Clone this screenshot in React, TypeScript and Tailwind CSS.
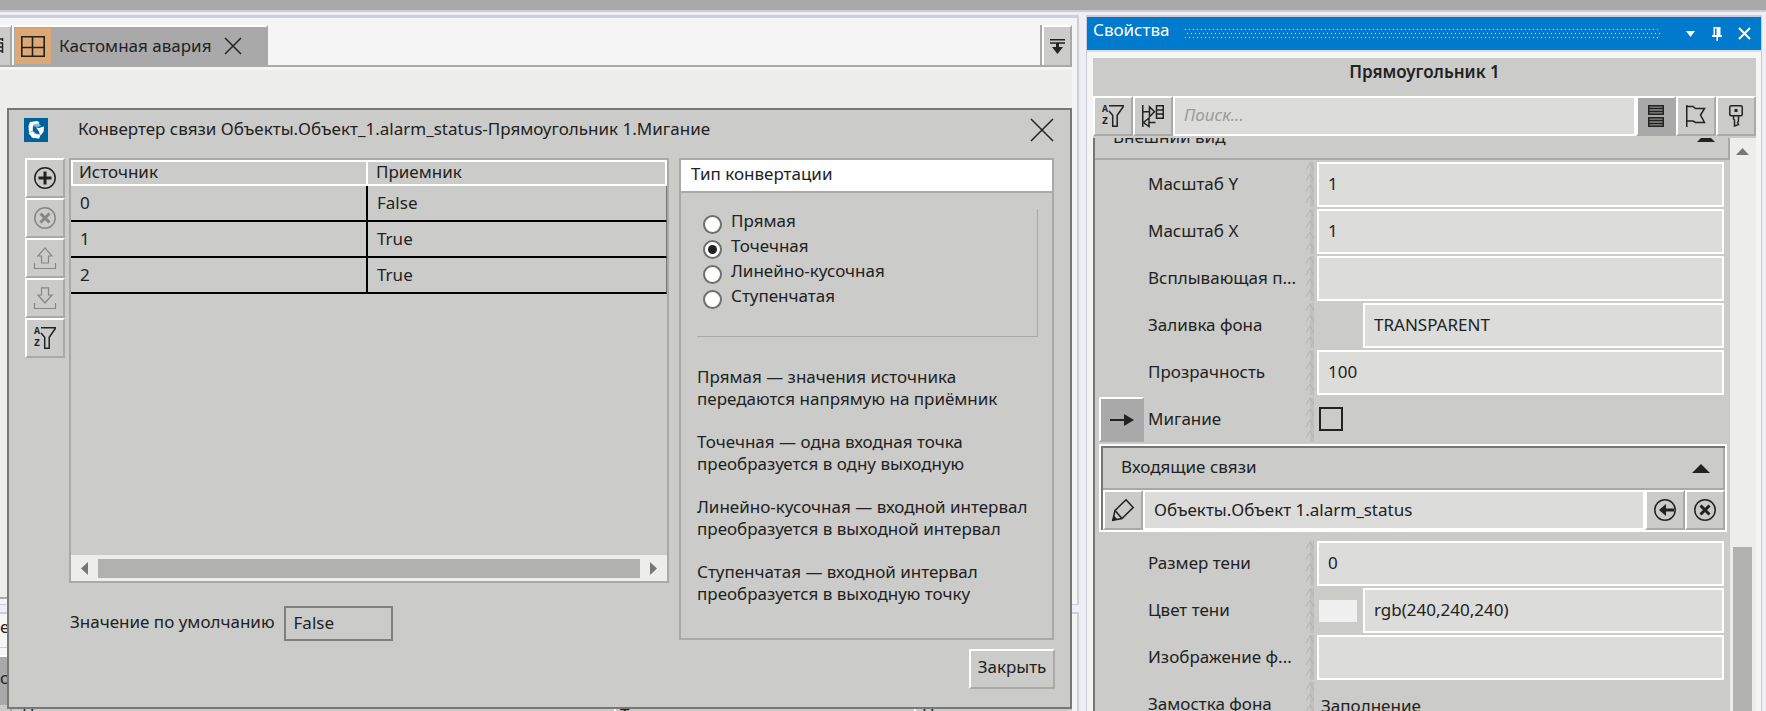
import React, { useState } from "react";
import clsx from "clsx";

const bevel =
  "border-2 border-t-white border-l-white border-r-[#a9a9a9] border-b-[#a9a9a9]";

const links = [
  { source: "0", target: "False" },
  { source: "1", target: "True" },
  { source: "2", target: "True" },
];

const modes = ["Прямая", "Точечная", "Линейно-кусочная", "Ступенчатая"];

const help = [
  ["Прямая — значения источника", "передаются напрямую на приёмник"],
  ["Точечная — одна входная точка", "преобразуется в одну выходную"],
  ["Линейно-кусочная — входной интервал", "преобразуется в выходной интервал"],
  ["Ступенчатая — входной интервал", "преобразуется в выходную точку"],
];

// --- Icons ---
interface IconProps {
  w?: number;
  h?: number;
  className?: string;
  sw?: number;
  children: React.ReactNode;
}

const Icon: React.FC<IconProps> = ({ w = 22, h = 22, className, sw = 1.5, children }) => (
  <svg
    width={w}
    height={h}
    viewBox={`0 0 ${w} ${h}`}
    fill="none"
    stroke="currentColor"
    strokeWidth={sw}
    className={clsx("shrink-0 overflow-visible", className)}
    aria-hidden="true"
  >
    {children}
  </svg>
);

const SortFilterIcon = () => (
  <Icon>
    <g
      fill="currentColor"
      stroke="none"
      fontFamily="'Liberation Mono', monospace"
      fontSize="10"
      fontWeight="bold"
    >
      <text x="0" y="7">A</text>
      <text x="0" y="19">Z</text>
    </g>
    <path d="M7 0.75H21.2V1.8L15.2 10.3V21.2H10.7V10.3L7 6" />
  </Icon>
);

const LinksIcon = () => (
  <Icon>
    <path d="M0.75 0V22M0.75 6.75H7.5M7.5 1.75L12.5 6.75L7.5 11.75ZM14.5 0.75H21.25V13.25H14.5ZM14.5 5H21.25M14.5 9H21.25" />
    <path d="M1.5 17.5L7 13V21.5ZM7 17.5H13.5" />
  </Icon>
);

const StackIcon = () => (
  <Icon w={16}>
    <path
      fill="#8c8c8a"
      d="M0.75 0.75H15.25V9.25H0.75ZM0.75 3.5H15.25M0.75 6.5H15.25M0.75 12.75H15.25V21.25H0.75ZM0.75 15.5H15.25M0.75 18.5H15.25"
    />
  </Icon>
);

const FlagIcon = () => (
  <Icon w={20}>
    <path d="M0.75 0V22M0.75 1.5H7L9.5 3.5H18.5L14.5 10L18.5 17.5H9.5L7 16H0.75" />
  </Icon>
);

const KeyIcon = () => (
  <Icon w={14}>
    <rect x="0.75" y="0.75" width="12.5" height="10" rx="1.5" />
    <rect x="5.5" y="4" width="3" height="3" fill="currentColor" stroke="none" />
    <path d="M4.5 11V14L5.5 15V21L9.5 19.5L8.5 17.5L9.5 16V11" />
  </Icon>
);

const PlusCircle = () => (
  <Icon>
    <circle cx="11" cy="11" r="10.2" />
    <path strokeWidth="3" d="M11 4.5V17.5M4.5 11H17.5" />
  </Icon>
);

const CrossCircle = () => (
  <Icon>
    <circle cx="11" cy="11" r="10.2" />
    <path strokeWidth="3" d="M6.5 6.5L15.5 15.5M15.5 6.5L6.5 15.5" />
  </Icon>
);

const BackCircle = () => (
  <Icon>
    <circle cx="11" cy="11" r="10.2" />
    <path strokeWidth="3" d="M10 11H20" />
    <path fill="currentColor" stroke="none" d="M5 11L12 5V17Z" />
  </Icon>
);

const MoveUpIcon = () => (
  <Icon sw={1.2}>
    <path d="M11 0.8L18 9H14.5V16H7.5V9H4ZM0.5 16V21.5H21.5V16" />
  </Icon>
);

const MoveDownIcon = () => (
  <Icon sw={1.2}>
    <path d="M7.5 0.8H14.5V8H18L11 16L4 8H7.5ZM0.5 16V21.5H21.5V16" />
  </Icon>
);

const PencilIcon = () => (
  <Icon>
    <path d="M14 0.8L21.2 8.5L10 19.5L0.8 21.2L3 11.5ZM3 11.5L10 19.5" />
    <path fill="currentColor" stroke="none" d="M1.8 16.5L5.5 20.5L0 22Z" />
  </Icon>
);

const CrossIcon = ({ size, sw }: { size: number; sw: number }) => (
  <Icon w={size} h={size} sw={sw}>
    <path d={`M0 0L${size} ${size}M${size} 0L0 ${size}`} />
  </Icon>
);

const Triangle = ({ w, h, className }: { w: number; h: number; className?: string }) => (
  <Icon w={w} h={h} className={className}>
    <path fill="currentColor" stroke="none" d={`M${w / 2} 0L${w} ${h}H0Z`} />
  </Icon>
);

const AppLogo = () => (
  <svg width="24" height="24" viewBox="0 0 24 24" className="shrink-0" aria-hidden="true">
    <rect width="24" height="24" fill="#00619d" />
    <path fill="#8fbcd9" d="M7 5L14 4L17 8L13 9L9 8L9 13L13 16L17 15L15.5 20.5L8 20L5 15Z" />
    <path fill="#fff" d="M6 4L13.5 3L15.5 5L9 6.5L8.5 12.5L5 14.5L4.5 8Z" />
    <path fill="#fff" d="M4.5 15L9 13.5L10.5 16L16 17L15 20.5L8.5 19.5Z" />
    <path fill="#fff" d="M12 9.5L15 10L20 8.5L19.5 14L16.5 17.5L15 13.5Z" />
  </svg>
);

const ToolButton: React.FC<{
  label: string;
  disabled?: boolean;
  active?: boolean;
  children: React.ReactNode;
}> = ({ label, disabled, active, children }) => (
  <button
    type="button"
    aria-label={label}
    disabled={disabled}
    className={clsx(
      "flex size-10 shrink-0 items-center justify-center",
      bevel,
      active && "bg-[#a9a9a9]",
      disabled && "text-[#868684]"
    )}
  >
    {children}
  </button>
);

// --- Converter dialog ---
const ConverterDialog = () => {
  const [mode, setMode] = useState("Точечная");

  return (
    <section
      role="dialog"
      aria-label="Конвертер связи"
      className="absolute top-[93px] right-[7px] left-[7px] z-10 border-2 border-[#777775] bg-[#cbcbc9]"
    >
      <header className="flex h-10 items-center pr-[17px] pl-[15px]">
        <AppLogo />
        <h2 className="ml-[30px] flex-1 pb-[2px]">
          Конвертер связи Объекты.Объект_1.alarm_status-Прямоугольник 1.Мигание
        </h2>
        <button type="button" aria-label="Закрыть окно">
          <CrossIcon size={22} sw={1.5} />
        </button>
      </header>

      <div className="mt-2 flex px-4">
        <div className="mr-1 flex flex-col">
          <ToolButton label="Добавить"><PlusCircle /></ToolButton>
          <ToolButton label="Удалить" disabled><CrossCircle /></ToolButton>
          <ToolButton label="Выше" disabled><MoveUpIcon /></ToolButton>
          <ToolButton label="Ниже" disabled><MoveDownIcon /></ToolButton>
          <ToolButton label="Сортировка"><SortFilterIcon /></ToolButton>
        </div>

        <div className="min-w-0 flex-1">
          <div className="flex h-[425px] flex-col border-2 border-[#a9a9a9]">
            <table className="w-full table-fixed border-separate border-spacing-0 text-left">
              <thead>
                <tr className="h-[26px]">
                  <th className="w-[297px] border-2 border-white p-0 pb-[2px] pl-[6px] leading-5 font-normal">
                    Источник
                  </th>
                  <th className="border-2 border-l-0 border-white p-0 pb-[2px] pl-2 leading-5 font-normal">
                    Приемник
                  </th>
                </tr>
              </thead>
              <tbody>
                {links.map((l) => (
                  <tr key={l.source} className="h-9">
                    <td className="border-r-2 border-b-2 border-r-black border-b-black p-0 pl-[9px]">
                      {l.source}
                    </td>
                    <td className="border-r border-b-2 border-r-[#777775] border-b-black p-0 pl-[9px]">
                      {l.target}
                    </td>
                  </tr>
                ))}
              </tbody>
            </table>
            <div className="mt-auto flex h-[26px] items-center bg-[#ededeb] px-[10px] text-[#777775]">
              <Icon w={7} h={13}>
                <path fill="currentColor" stroke="none" d="M7 0V13L0 6.5Z" />
              </Icon>
              <div className="mx-[10px] h-[19px] flex-1 bg-[#b1b1af]" />
              <Icon w={7} h={13}>
                <path fill="currentColor" stroke="none" d="M0 0V13L7 6.5Z" />
              </Icon>
            </div>
          </div>
          <div className="mt-[23px] flex items-center gap-[9px] pl-px">
            <label htmlFor="default" className="pb-[3px]">Значение по умолчанию</label>
            <input
              id="default"
              defaultValue="False"
              className="h-[35px] w-[109px] border-2 border-[#7f7f7d] px-2 pb-[2px]"
            />
          </div>
        </div>

        <div className="ml-[10px] h-[482px] w-[375px] border-2 border-[#a9a9a9]">
          <h3 className="border-b-2 border-[#a9a9a9] bg-white pt-[3px] pb-[6px] pl-[10px]">
            Тип конвертации
          </h3>
          <div className="pt-4 pr-[14px] pl-4">
            <fieldset className="h-32 border-r border-b border-[#a9a9a9] pl-[6px]">
              {modes.map((m) => (
                <label key={m} className="flex h-[25px] items-start gap-[9px] leading-6">
                  <input
                    type="radio"
                    name="mode"
                    checked={mode === m}
                    onChange={() => setMode(m)}
                    className="mt-[6px] grid size-[19px] appearance-none place-items-center rounded-full border-2 border-[#6f6f6d] bg-white before:size-[9px] before:rounded-full checked:before:bg-[#222]"
                  />
                  {m}
                </label>
              ))}
            </fieldset>
            <div className="mt-[29px] space-y-[21px] whitespace-nowrap">
              {help.map(([a, b]) => (
                <p key={a}>
                  {a}
                  <br />
                  {b}
                </p>
              ))}
            </div>
          </div>
        </div>
      </div>

      <div className="flex justify-end pt-2 pr-[15px] pb-[18px]">
        <button type="button" className={clsx("h-10 w-[86px] pb-[5px]", bevel)}>
          Закрыть
        </button>
      </div>
    </section>
  );
};

// --- Document area, mostly hidden behind the dialog ---
const DocumentArea = () => (
  <div className="relative flex min-w-0 flex-1 flex-col">
    <div className="flex h-[590px] shrink-0 flex-col border-t-[3px] border-r-2 border-b border-[#cbcedb] bg-[#f5f5f5] pr-[5px] pb-[5px]">
      <div className="mt-[7px] flex h-[42px] border-b-2 border-[#a9a9a9]">
        <div className="flex w-3 items-center border-t-2 border-r-2 border-t-white border-r-[#a9a9a9] bg-[#cbcbc9]">
          <Icon w={3} h={16}>
            <path d="M0 1H3M0 5H3M0 9H3M0 13H3M2.5 0V3M2.5 5V15" />
          </Icon>
        </div>
        <div className="ml-[2px] flex items-center border-t-2 border-r-2 border-t-white border-r-[#a9a9a9] bg-[#a9a9a9] pr-[25px] pl-px">
          <span className="flex size-9 items-center justify-center bg-[#dda873]">
            <Icon w={24} h={21} sw={1.6}>
              <path d="M0.8 0.8H23.2V20.2H0.8ZM11.5 0.8V20.2M0.8 11.5H23.2" />
            </Icon>
          </span>
          <span className="mr-[13px] ml-2">Кастомная авария</span>
          <button type="button" aria-label="Закрыть вкладку">
            <CrossIcon size={16} sw={1.5} />
          </button>
        </div>
        <div className="ml-auto flex border-l-2 border-[#a9a9a9]">
          <button
            type="button"
            aria-label="Список вкладок"
            className="flex w-[30px] items-center justify-center border-t-2 border-r-2 border-l-2 border-t-white border-r-[#a9a9a9] border-l-white bg-[#cbcbc9]"
          >
            <Icon w={15} h={15}>
              <path d="M0 0.75H15M0 4H15" />
              <path strokeWidth="3" d="M7.5 4V10" />
              <path fill="currentColor" stroke="none" d="M2 8H13L7.5 15Z" />
            </Icon>
          </button>
        </div>
      </div>
      <div className="mt-[3px] flex-1 border-b-2 border-[#a9a9a9] bg-[#ededeb]" />
    </div>

    <div className="mt-[7px] flex min-h-0 flex-1 flex-col overflow-hidden border-t-2 border-r-2 border-[#cbcedb] bg-[#f5f5f5] pr-[5px]">
      <div className="h-[34px] shrink-0 border-b border-[#cbcedb] pt-[2px]">е</div>
      <div className="mt-[7px] h-[50px] shrink-0 border-t-2 border-white bg-[#a9a9a9] pt-[10px]">
        <span className="flex w-[10px] justify-end">По</span>
      </div>
      <div className="flex h-6 shrink-0 bg-[#cbcbc9] leading-5">
        <span className="w-3 border-r-2 border-[#a9a9a9]" />
        <span className="w-[602px] pl-[10px]">Н</span>
        <span className="w-[300px] border-l-2 border-white pl-1">Т</span>
        <span className="border-l-2 border-white pl-[6px]">Н</span>
      </div>
    </div>

    <ConverterDialog />
  </div>
);

// --- Properties panel ---
const fieldClass =
  "h-[45px] min-w-0 flex-1 border-2 border-white bg-[#dcdcda] px-[9px] pb-[2px]";

const Grip = () => (
  <svg width="8" height="45" className="shrink-0" aria-hidden="true">
    <defs>
      <pattern id="grip" width="8" height="11" patternUnits="userSpaceOnUse">
        <path d="M4 0H8V11H4Z" fill="#bfbfbd" />
        <path d="M0 8L4 1L8 8" fill="none" stroke="#b3b3b1" />
      </pattern>
    </defs>
    <rect width="8" height="45" fill="url(#grip)" />
  </svg>
);

interface RowProps {
  id: string;
  label: string;
  marker?: boolean;
  children: React.ReactNode;
}

const Row: React.FC<RowProps> = ({ id, label, marker, children }) => (
  <div className="mb-[2px] flex h-[45px] items-center pr-[6px] pl-1">
    <div className="mr-1 w-[45px] shrink-0">
      {marker && (
        <button
          type="button"
          aria-label="Связь"
          className={clsx("flex size-[45px] items-center justify-center bg-[#a9a9a9]", bevel)}
        >
          <Icon w={24} h={12} sw={2}>
            <path d="M0 6H16" />
            <path fill="currentColor" stroke="none" d="M14 0L24 6L14 12Z" />
          </Icon>
        </button>
      )}
    </div>
    <label htmlFor={id} className="w-[158px] shrink-0 pb-[2px] whitespace-nowrap">
      {label}
    </label>
    <Grip />
    <div className="ml-[3px] flex min-w-0 flex-1 items-center">{children}</div>
  </div>
);

const TextRow = ({ id, label, value }: { id: string; label: string; value: string }) => (
  <Row id={id} label={label}>
    <input id={id} defaultValue={value} className={fieldClass} />
  </Row>
);

const IncomingLinks = () => (
  <div className="mr-[3px] mb-[9px] ml-1 border-2 border-white">
    <div className="border-t-2 border-l-2 border-[#777775]">
      <button
        type="button"
        className="flex h-[42px] w-full items-center justify-between border-r-2 border-b-2 border-[#a9a9a9] pr-[13px] pl-[18px]"
      >
        <span className="pb-[2px]">Входящие связи</span>
        <Triangle w={18} h={9} />
      </button>
      <div className="flex">
        <ToolButton label="Изменить"><PencilIcon /></ToolButton>
        <input
          aria-label="Входящая связь"
          defaultValue="Объекты.Объект 1.alarm_status"
          className="h-10 min-w-0 flex-1 border-2 border-white bg-[#dcdcda] px-[9px] pb-[2px]"
        />
        <ToolButton label="Вернуть"><BackCircle /></ToolButton>
        <ToolButton label="Удалить связь"><CrossCircle /></ToolButton>
      </div>
    </div>
  </div>
);

const PropertiesPanel = () => (
  <aside className="mr-1 ml-[7px] flex w-[676px] shrink-0 flex-col border-x border-t-2 border-[#cbcbdb] bg-[#f5f5f5]">
    <header className="flex h-[33px] shrink-0 items-center bg-[#007acc] pr-[11px] pl-[6px] text-white">
      <h1 className="pb-2">Свойства</h1>
      <svg className="ml-4 h-[9px] min-w-0 flex-1" aria-hidden="true">
        <defs>
          <pattern id="dots" width="4" height="8" patternUnits="userSpaceOnUse">
            <path fill="#fff" d="M0 0H1V1H0ZM2 4H3V5H2Z" />
          </pattern>
        </defs>
        <rect width="100%" height="9" fill="url(#dots)" />
      </svg>
      <button type="button" aria-label="Меню" className="ml-[25px]">
        <Triangle w={9} h={6} className="rotate-180" />
      </button>
      <button type="button" aria-label="Закрепить" className="ml-[17px]">
        <Icon w={10} h={14}>
          <path fill="currentColor" stroke="none" d="M1.5 0H8.5V8H10V10H6V14H4.5V10H0V8H1.5Z" />
          <path stroke="#007acc" d="M3.75 1.5V8" />
        </Icon>
      </button>
      <button type="button" aria-label="Закрыть панель" className="ml-[17px]">
        <CrossIcon size={11} sw={2} />
      </button>
    </header>

    <div className="flex min-h-0 flex-1 flex-col border-t-2 border-[#dcdce6] pt-[6px] pr-[5px] pl-[6px]">
      <h2 className="h-[38px] shrink-0 bg-[#cbcbc9] text-center leading-7 font-semibold">
        Прямоугольник 1
      </h2>
      <div className="flex shrink-0 bg-[#cbcbc9] pb-[2px]">
        <ToolButton label="Сортировка свойств"><SortFilterIcon /></ToolButton>
        <ToolButton label="Связи"><LinksIcon /></ToolButton>
        <input
          type="search"
          aria-label="Поиск"
          placeholder="Поиск..."
          className="h-10 min-w-0 flex-1 border-2 border-white bg-[#dcdcda] px-[9px] pb-[3px] placeholder:text-[#9b9b99] placeholder:italic"
        />
        <ToolButton label="Список" active><StackIcon /></ToolButton>
        <ToolButton label="Флаги"><FlagIcon /></ToolButton>
        <ToolButton label="Ключи"><KeyIcon /></ToolButton>
      </div>

      <div className="flex min-h-0 flex-1">
        <div className="min-w-0 flex-1 overflow-hidden border-l-2 border-[#777775] bg-[#cbcbc9]">
          {/* scrolled half a header down */}
          <button
            type="button"
            className="-mt-[22px] mb-[2px] flex h-11 w-full items-center justify-between border-r-2 border-b-2 border-[#a9a9a9] pr-[13px] pl-[18px]"
          >
            <span>Внешний вид</span>
            <Triangle w={18} h={9} />
          </button>
          <TextRow id="scale-y" label="Масштаб Y" value="1" />
          <TextRow id="scale-x" label="Масштаб X" value="1" />
          <TextRow id="tooltip" label="Всплывающая п..." value="" />
          <Row id="fill" label="Заливка фона">
            <input id="fill" defaultValue="TRANSPARENT" className={clsx("ml-[46px]", fieldClass)} />
          </Row>
          <TextRow id="opacity" label="Прозрачность" value="100" />
          <Row id="blink" label="Мигание" marker>
            <input
              id="blink"
              type="checkbox"
              className="mb-[2px] ml-[2px] size-6 appearance-none border-2 border-[#222] checked:bg-[#222]"
            />
          </Row>
          <IncomingLinks />
          <TextRow id="shadow-size" label="Размер тени" value="0" />
          <Row id="shadow-color" label="Цвет тени">
            <span className="mr-[6px] ml-[2px] h-[22px] w-[38px] bg-[#f0f0f0]" />
            <input id="shadow-color" defaultValue="rgb(240,240,240)" className={fieldClass} />
          </Row>
          <TextRow id="image" label="Изображение ф..." value="" />
          <Row id="tiling" label="Замостка фона">
            <select id="tiling" className="mt-[2px] flex-1 appearance-none pl-1">
              <option>Заполнение</option>
            </select>
          </Row>
        </div>
        <div className="flex w-[26px] shrink-0 flex-col items-center bg-[#ededeb] pt-[10px] pr-px text-[#777775]">
          <Triangle w={13} h={7} />
          <div className="mt-[392px] w-[19px] flex-1 bg-[#b1b1af]" />
        </div>
      </div>
    </div>
  </aside>
);

export default function App() {
  return (
    <div className="flex h-screen flex-col overflow-hidden bg-[#eeeef4] font-['Noto_Sans','Open_Sans',sans-serif] text-[17px] leading-[22px] text-[#222]">
      <div className="h-3 shrink-0 border-b-2 border-[#cbcbdb] bg-[#a9a9a9]" />
      <main className="mt-[3px] flex min-h-0 flex-1">
        <DocumentArea />
        <PropertiesPanel />
      </main>
    </div>
  );
}
